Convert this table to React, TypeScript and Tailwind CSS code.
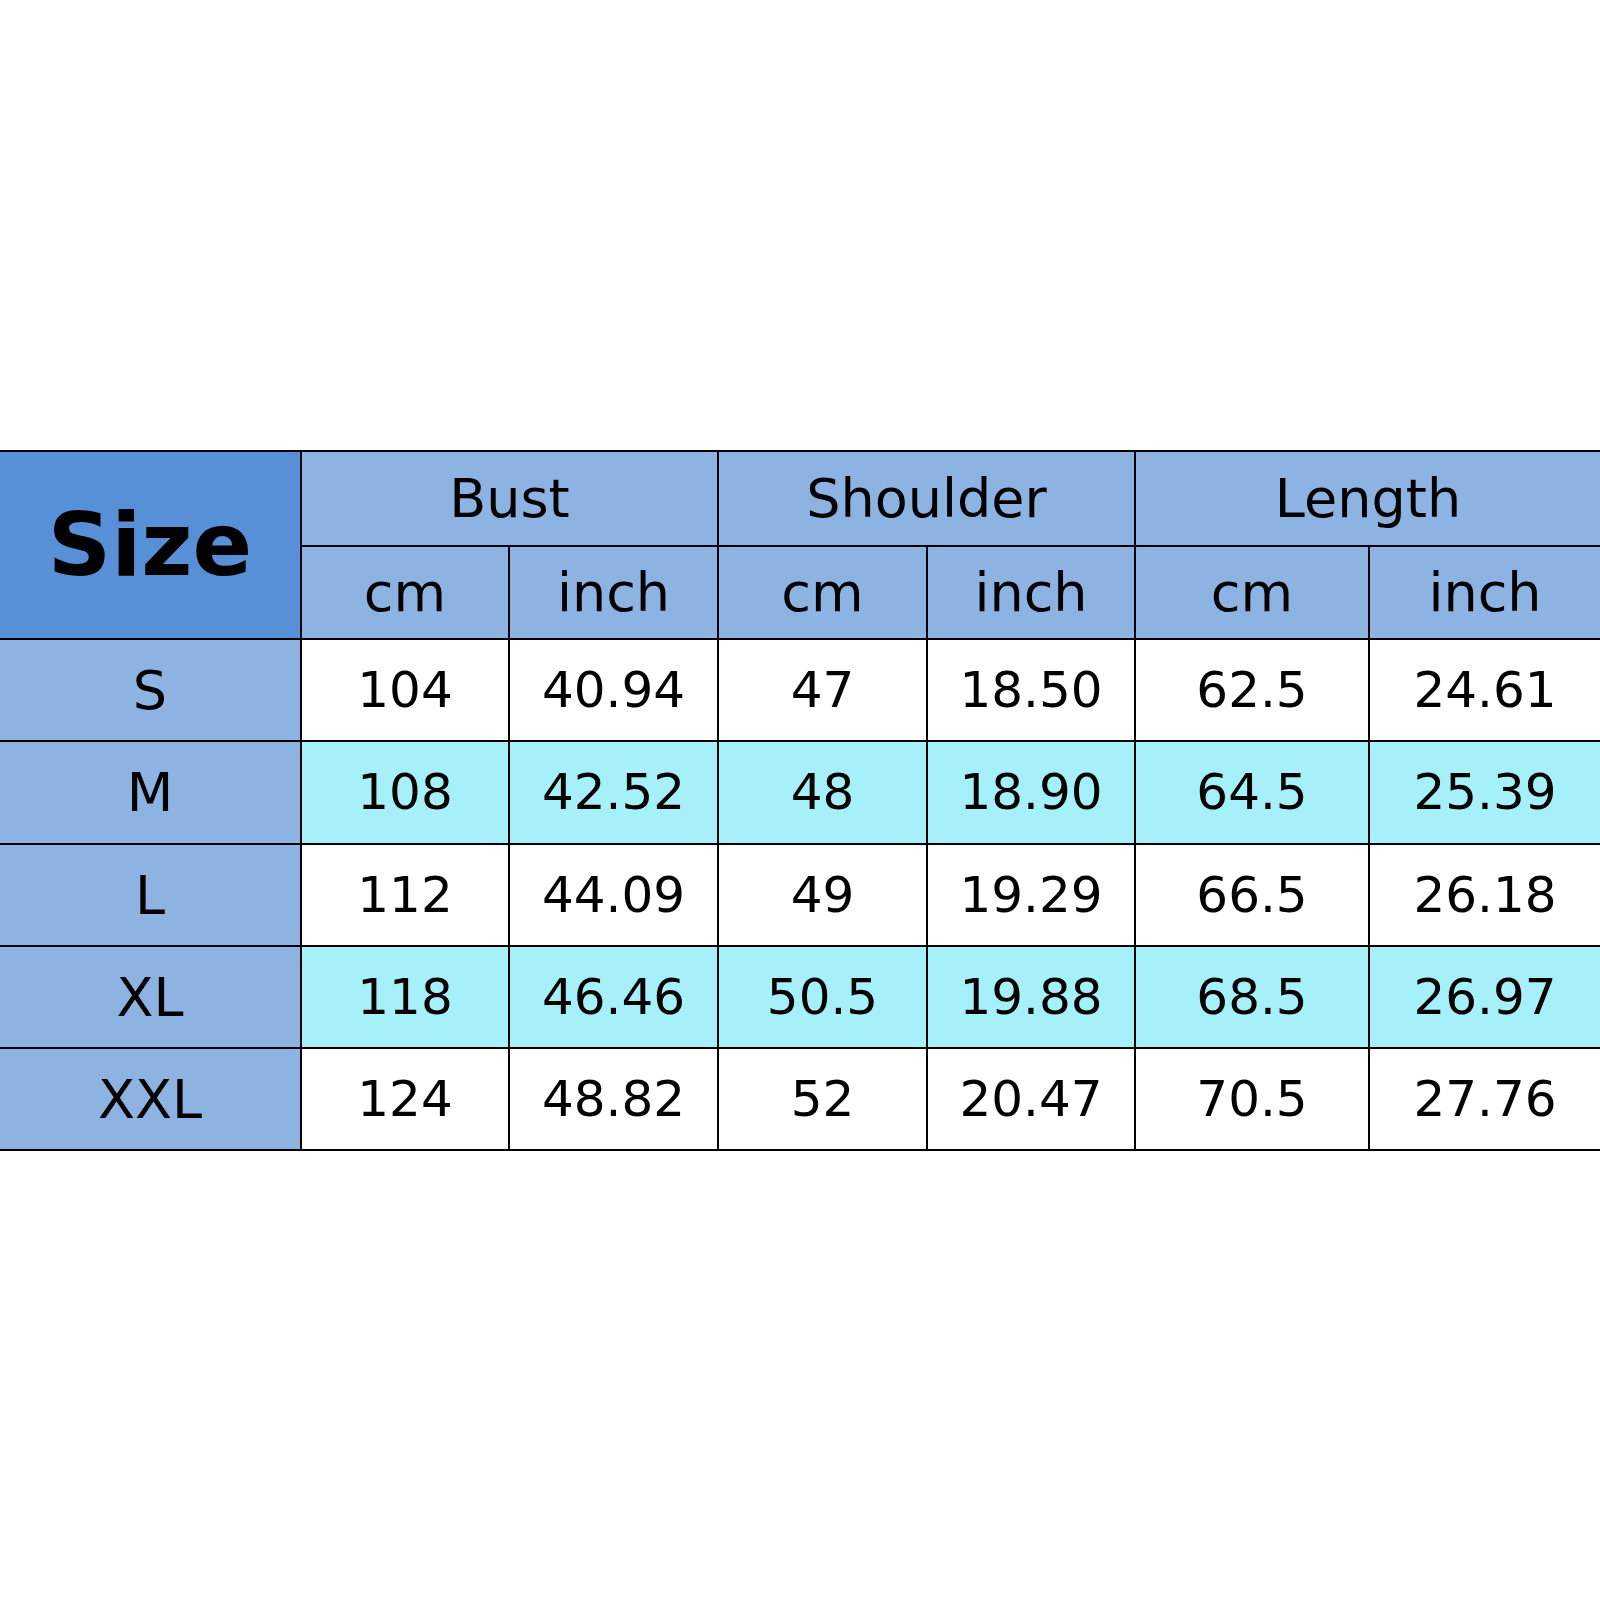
const rows = [
  { size: "S", values: ["104", "40.94", "47", "18.50", "62.5", "24.61"] },
  { size: "M", values: ["108", "42.52", "48", "18.90", "64.5", "25.39"] },
  { size: "L", values: ["112", "44.09", "49", "19.29", "66.5", "26.18"] },
  { size: "XL", values: ["118", "46.46", "50.5", "19.88", "68.5", "26.97"] },
  { size: "XXL", values: ["124", "48.82", "52", "20.47", "70.5", "27.76"] },
];

const cell = "flex items-center justify-center border-b-2 border-black";

export default function App() {
  return (
    <div className="min-h-[1600px] w-[1600px] bg-white pt-[450px] font-['Comic_Sans_MS','DejaVu_Sans',sans-serif] text-black">
      <div className="grid grid-cols-[302px_208px_209px_209px_208px_234px_230px] grid-rows-[95px_93px_102px_103px_102px_102px_102px] border-t-2 border-black">
        <div className={`${cell} row-span-2 border-r-2 bg-[#5790d6] text-[88px] font-bold`}>
          Size
        </div>
        <div className={`${cell} col-span-2 border-r-2 bg-[#8db3e2] text-[54px]`}>Bust</div>
        <div className={`${cell} col-span-2 border-r-2 bg-[#8db3e2] text-[54px]`}>Shoulder</div>
        <div className={`${cell} col-span-2 bg-[#8db3e2] text-[54px]`}>Length</div>
        {["cm", "inch", "cm", "inch", "cm", "inch"].map((unit, i) => (
          <div
            key={i}
            className={`${cell} bg-[#8db3e2] text-[54px] ${i < 5 ? "border-r-2" : ""}`}
          >
            {unit}
          </div>
        ))}
        {rows.map((row, r) => (
          <Row key={row.size} size={row.size} values={row.values} alt={r % 2 === 1} />
        ))}
      </div>
    </div>
  );
}

function Row({ size, values, alt }: { size: string; values: string[]; alt: boolean }) {
  return (
    <>
      <div className={`${cell} border-r-2 bg-[#8db3e2] text-[54px]`}>{size}</div>
      {values.map((v, i) => (
        <div
          key={i}
          className={`${cell} text-[50px] ${alt ? "bg-[#a6f1f9]" : "bg-white"} ${i < 5 ? "border-r-2" : ""}`}
        >
          {v}
        </div>
      ))}
    </>
  );
}
